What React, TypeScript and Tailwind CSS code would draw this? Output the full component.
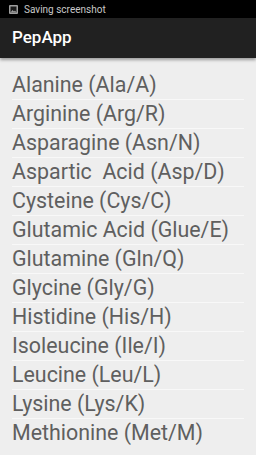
const acids = [
  "Alanine (Ala/A)",
  "Arginine (Arg/R)",
  "Asparagine (Asn/N)",
  "Aspartic  Acid (Asp/D)",
  "Cysteine (Cys/C)",
  "Glutamic Acid (Glue/E)",
  "Glutamine (Gln/Q)",
  "Glycine (Gly/G)",
  "Histidine (His/H)",
  "Isoleucine (Ile/I)",
  "Leucine (Leu/L)",
  "Lysine (Lys/K)",
  "Methionine (Met/M)",
]

function ShotIcon() {
  return (
    <svg width="9" height="9" viewBox="0 0 9 9">
      <rect x="0" y="0" width="9" height="9" rx="1" fill="#9e9e9e" />
      <rect x="1.5" y="1.5" width="6" height="6" fill="#1a1a1a" />
      <path d="M1.5 7.5 L3.5 5 L5 6.5 L6 5.5 L7.5 7.5 Z" fill="#9e9e9e" />
    </svg>
  )
}

export default function App() {
  return (
    <div className="flex h-[455px] w-[256px] flex-col overflow-hidden bg-[#eeeeee] font-['Roboto',sans-serif]">
      <div className="flex h-[18px] items-center gap-[6px] bg-black pl-[9px]">
        <ShotIcon />
        <span className="text-[10px] text-[#c8c8c8]">Saving screenshot</span>
      </div>
      <div className="relative flex h-[40px] items-center bg-[#212121] pl-[12px] shadow-[0_2px_3px_rgba(0,0,0,0.35)]">
        <span className="text-[17px] font-medium text-white">PepApp</span>
      </div>
      <ul className="flex flex-col px-[12px] pt-[13px]">
        {acids.map((a, i) => (
          <li
            key={a}
            className={
              "h-[29px] whitespace-pre text-[21.4px] leading-[28px] text-[#5f5f5f] " +
              (i < acids.length - 1 ? "border-b border-[#f8f8f8]" : "")
            }
          >
            {a}
          </li>
        ))}
      </ul>
    </div>
  )
}
